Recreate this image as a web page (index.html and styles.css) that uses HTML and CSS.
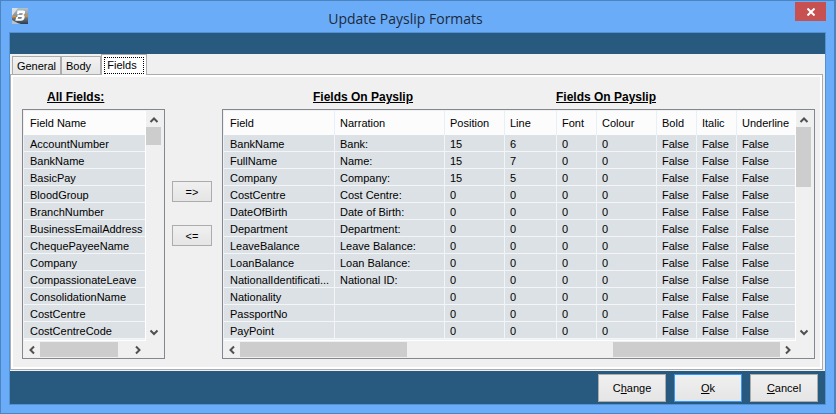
FILE: index.html
```html
<!DOCTYPE html>
<html lang="en">
<head>
<meta charset="utf-8">
<title>Update Payslip Formats</title>
<link rel="stylesheet" href="styles.css">
</head>
<body>
<main class="window">
  <header class="titlebar">
    <svg class="app-icon" viewBox="0 0 16 16" aria-hidden="true">
      <defs>
        <linearGradient id="tile" x1="0" y1="0" x2="0" y2="1">
          <stop offset="0" stop-color="#b4c2cc"/><stop offset=".45" stop-color="#8a959d"/><stop offset="1" stop-color="#2c3b4a"/>
        </linearGradient>
      </defs>
      <rect width="16" height="16" fill="url(#tile)"/>
      <path d="M0 0h6L0 8z" fill="#d5e0e8"/>
      <path d="M0 8.500h4M12.500 8h3.500" stroke="#f08a24" stroke-width="1.500"/>
      <path d="M0 12q5 3 9 4H0z" fill="#b5c3cd"/>
      <path fill-rule="evenodd" d="M5.500 2.500h5.500q2.500 0 2 2.300-.3 1.500-1.500 2.200 1.500.8 1.100 2.700-.7 3-3.800 3H3.300l1-3.700h1.800l-.4 1.700h3q1 0 1.200-.9.200-.9-.8-.9H5.200l.5-2h3.900q1 0 1.200-.9.200-.9-.8-.9H7.300l-.3 1.200H5z" fill="#fff"/>
    </svg>
    <h1 class="title">Update Payslip Formats</h1>
    <button class="close" type="button" aria-label="Close">
      <svg viewBox="0 0 8 8" aria-hidden="true"><path d="M.5.5l7 7M7.500.5l-7 7"/></svg>
    </button>
  </header>
  <div class="client">
    <div class="banner"></div>
    <section class="content">
      <div class="tabs" role="tablist">
        <button class="tab tab-general" type="button" role="tab">General</button>
        <button class="tab tab-body" type="button" role="tab">Body</button>
        <button class="tab tab-active" type="button" role="tab" aria-selected="true"><span class="focus">Fields</span></button>
      </div>
      <div class="page" role="tabpanel">
        <div class="available">
          <h2 class="heading">All Fields:</h2>
          <div class="list">
            <div class="rows">
              <table>
                <thead><tr><th>Field Name</th></tr></thead>
                <tbody>
                  <tr><td>AccountNumber</td></tr>
                  <tr><td>BankName</td></tr>
                  <tr><td>BasicPay</td></tr>
                  <tr><td>BloodGroup</td></tr>
                  <tr><td>BranchNumber</td></tr>
                  <tr><td>BusinessEmailAddress</td></tr>
                  <tr><td>ChequePayeeName</td></tr>
                  <tr><td>Company</td></tr>
                  <tr><td>CompassionateLeave</td></tr>
                  <tr><td>ConsolidationName</td></tr>
                  <tr><td>CostCentre</td></tr>
                  <tr><td>CostCentreCode</td></tr>
                </tbody>
              </table>
            </div>
            <div class="vscroll">
              <svg class="arrow" viewBox="0 0 16 16"><path d="M4.500 11 8 7.500l3.500 3.500"/></svg>
              <span class="vthumb vthumb-short"></span>
              <svg class="arrow arrow-end" viewBox="0 0 16 16"><path d="M4.500 5.500 8 9l3.500-3.500"/></svg>
            </div>
            <div class="hscroll">
              <svg class="arrow" viewBox="0 0 16 16"><path d="M10 4.500 6.500 8l3.500 3.500"/></svg>
              <span class="hthumb hthumb-short"></span>
              <svg class="arrow arrow-right" viewBox="0 0 16 16"><path d="M6 4.500 9.500 8 6 11.500"/></svg>
            </div>
          </div>
        </div>
        <div class="movers">
          <button class="button" type="button" aria-label="Add field">=&gt;</button>
          <button class="button" type="button" aria-label="Remove field">&lt;=</button>
        </div>
        <div class="chosen">
          <div class="headings">
            <h2 class="heading">Fields On Payslip</h2>
            <h2 class="heading">Fields On Payslip</h2>
          </div>
          <div class="list">
            <div class="rows">
              <table>
                <colgroup>
                  <col class="c110"><col class="c110"><col class="c60"><col class="c52"><col class="c40"><col class="c60"><col class="c40"><col class="c40"><col>
                </colgroup>
                <thead><tr><th>Field</th><th>Narration</th><th>Position</th><th>Line</th><th>Font</th><th>Colour</th><th>Bold</th><th>Italic</th><th>Underline</th></tr></thead>
                <tbody>
                  <tr><td>BankName</td><td>Bank:</td><td>15</td><td>6</td><td>0</td><td>0</td><td>False</td><td>False</td><td>False</td></tr>
                  <tr><td>FullName</td><td>Name:</td><td>15</td><td>7</td><td>0</td><td>0</td><td>False</td><td>False</td><td>False</td></tr>
                  <tr><td>Company</td><td>Company:</td><td>15</td><td>5</td><td>0</td><td>0</td><td>False</td><td>False</td><td>False</td></tr>
                  <tr><td>CostCentre</td><td>Cost Centre:</td><td>0</td><td>0</td><td>0</td><td>0</td><td>False</td><td>False</td><td>False</td></tr>
                  <tr><td>DateOfBirth</td><td>Date of Birth:</td><td>0</td><td>0</td><td>0</td><td>0</td><td>False</td><td>False</td><td>False</td></tr>
                  <tr><td>Department</td><td>Department:</td><td>0</td><td>0</td><td>0</td><td>0</td><td>False</td><td>False</td><td>False</td></tr>
                  <tr><td>LeaveBalance</td><td>Leave Balance:</td><td>0</td><td>0</td><td>0</td><td>0</td><td>False</td><td>False</td><td>False</td></tr>
                  <tr><td>LoanBalance</td><td>Loan Balance:</td><td>0</td><td>0</td><td>0</td><td>0</td><td>False</td><td>False</td><td>False</td></tr>
                  <tr><td>NationalIdentificati...</td><td>National ID:</td><td>0</td><td>0</td><td>0</td><td>0</td><td>False</td><td>False</td><td>False</td></tr>
                  <tr><td>Nationality</td><td></td><td>0</td><td>0</td><td>0</td><td>0</td><td>False</td><td>False</td><td>False</td></tr>
                  <tr><td>PassportNo</td><td></td><td>0</td><td>0</td><td>0</td><td>0</td><td>False</td><td>False</td><td>False</td></tr>
                  <tr><td>PayPoint</td><td></td><td>0</td><td>0</td><td>0</td><td>0</td><td>False</td><td>False</td><td>False</td></tr>
                </tbody>
              </table>
            </div>
            <div class="vscroll">
              <svg class="arrow" viewBox="0 0 16 16"><path d="M4.500 11 8 7.500l3.500 3.500"/></svg>
              <span class="vthumb vthumb-long"></span>
              <svg class="arrow arrow-end" viewBox="0 0 16 16"><path d="M4.500 5.500 8 9l3.500-3.500"/></svg>
            </div>
            <div class="hscroll">
              <svg class="arrow" viewBox="0 0 16 16"><path d="M10 4.500 6.500 8l3.500 3.500"/></svg>
              <span class="hthumb hthumb-long"></span>
              <span class="hthumb hthumb-long hthumb-end"></span>
              <svg class="arrow" viewBox="0 0 16 16"><path d="M6 4.500 9.500 8 6 11.500"/></svg>
            </div>
          </div>
        </div>
      </div>
    </section>
    <footer class="actions">
      <button class="button" type="button">C<u>h</u>ange</button>
      <button class="button button-default" type="button"><u>O</u>k</button>
      <button class="button" type="button"><u>C</u>ancel</button>
    </footer>
  </div>
</main>
</body>
</html>
```
FILE: styles.css
```css
* { box-sizing: border-box; }

body {
  margin: 0;
  background: #6aacf8;
  color: #000;
  font: 11px/16px "Liberation Sans", Arial, sans-serif;
}

button { font: inherit; color: inherit; padding: 0; }
h1, h2 { margin: 0; }
svg { display: block; }

.window {
  display: flex;
  flex-direction: column;
  min-height: 100vh;
  padding: 0 8px 8px;
  border: 1px solid #4c84c2;
  border-right-width: 2px;
}

.titlebar {
  display: grid;
  grid-template-columns: 32px 1fr 32px;
  height: 31px;
}
.app-icon { width: 16px; height: 16px; margin: 7px 0 0 3px; }
.title {
  color: #1c2a3c;
  font: 14px/36px "Open Sans", "Segoe UI", sans-serif;
  text-align: center;
  margin-right: 24px;
}
.close {
  width: 31px;
  height: 19px;
  margin: 1px 0 0 1px;
  border: 0;
  background: #c75050;
  display: grid;
  place-items: center;
}
.close svg { width: 8px; height: 8px; }
.close path { stroke: #fff; stroke-width: 2; }

.client {
  flex: 1;
  display: flex;
  flex-direction: column;
  border: 1px solid #5490d4;
}
.banner { height: 21px; background: #285a80; }

.content {
  flex: 1;
  display: flex;
  flex-direction: column;
  padding: 0 2px 1px 0;
  background: #f0f0f0;
}

.tabs { display: flex; align-items: flex-end; height: 20px; padding-left: 2px; }
.tab {
  height: 18px;
  border: 1px solid #acacac;
  border-bottom: 0;
  background: linear-gradient(#f2f2f2, #e6e6e6);
}
.tab-general { width: 49px; }
.tab-body { width: 40px; padding-right: 5px; }
.tab-active {
  width: 46px;
  height: 21px;
  margin-bottom: -1px;
  padding: 2px;
  background: #fff;
  z-index: 1;
}
.focus { display: block; height: 17px; line-height: 14px; padding-right: 4px; border: 1px dotted #000; }

.page {
  flex: 1;
  display: flex;
  border: 1px solid #acacac;
  background: #f0f0f0;
  box-shadow: inset 0 0 0 2px #fff;
  padding: 14px 7px 10px 11px;
}

.heading {
  font-size: 12px;
  line-height: 16px;
  font-weight: bold;
  text-decoration: underline;
}
.available, .chosen { display: flex; flex-direction: column; gap: 4px; }
.available { width: 143px; }
.available .heading { margin-left: 25px; }
.chosen { flex: 1; }
.headings { display: grid; grid-template-columns: 243px auto; padding-left: 91px; }

.movers {
  display: flex;
  flex-direction: column;
  gap: 23px;
  width: 57px;
  padding: 92px 10px 0 7px;
}
.movers .button { height: 21px; }

.list {
  flex: 1;
  display: grid;
  grid-template: 1fr 15px / 1fr 16px;
  row-gap: 1px;
  border: 1px solid #828790;
  padding: 1px 2px 1px 1px;
}
.rows {
  background: #f0f0f0;
  border-bottom: 1px solid #fff;
  border-right: 1px solid #fff;
}
table { width: 100%; border-collapse: separate; border-spacing: 0; table-layout: fixed; }
th, td {
  height: 17px;
  padding: 0 0 0 5px;
  text-align: left;
  font-weight: normal;
  white-space: nowrap;
}
th { height: 24px; background: #fcfcfc; border-left: 1px solid #e6f0fa; }
td {
  padding-top: 2px;
  line-height: 14px;
  background: #dce1e5;
  border-left: 1px solid #f2f4f5;
  border-bottom: 1px solid #f4f5f6;
}
th:first-child, td:first-child { padding-left: 6px; border-left: 0; }
.c110 { width: 110px; }
.c60 { width: 60px; }
.c52 { width: 52px; }
.c40 { width: 40px; }

.vscroll { display: flex; flex-direction: column; background: #f0f0f0; }
.hscroll { grid-column: 1 / -1; display: flex; padding-right: 16px; }
.arrow { flex: none; width: 16px; height: 16px; }
.arrow path { fill: none; stroke: #505050; stroke-width: 2; }
.arrow-end { margin-top: auto; }
.arrow-right { margin-left: auto; }
.vthumb, .hthumb { background: #cdcdcd; }
.vthumb { width: 15px; }
.vthumb-short { height: 18px; }
.vthumb-long { height: 60px; }
.hthumb { height: 15px; }
.hthumb-short { width: 78px; }
.hthumb-long { width: 167px; }
.hthumb-end { margin-left: auto; }

.button {
  border: 1px solid #acacac;
  background: linear-gradient(#f0f0f0, #e5e5e5);
}
.actions {
  display: flex;
  justify-content: flex-end;
  gap: 8px;
  padding: 3px 7px 2px;
  background: #285a80;
}
.actions .button { width: 68px; height: 28px; }
.button-default { border-color: #3399ff; }
```
